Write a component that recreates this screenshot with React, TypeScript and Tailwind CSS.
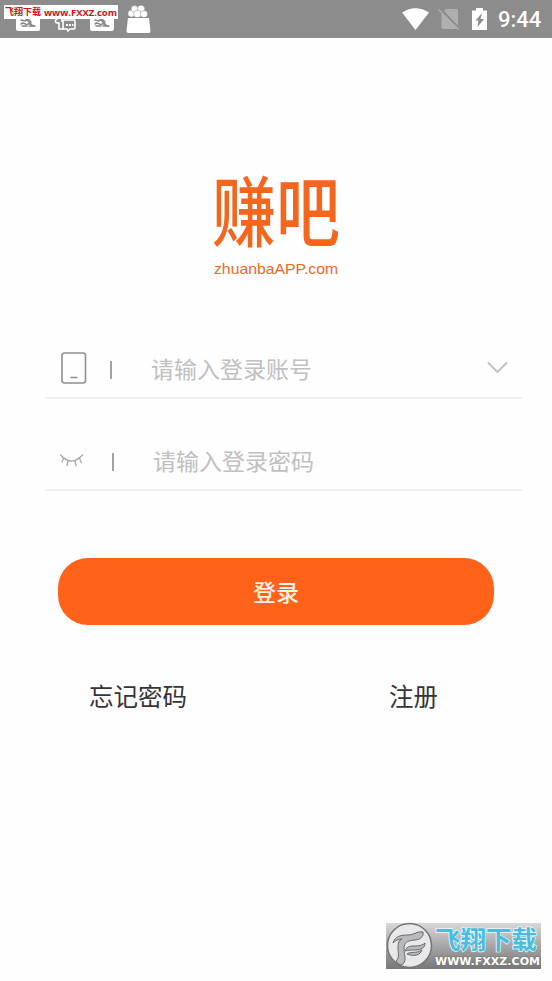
import React, { useState } from "react";

type IconProps = { className?: string };

const PictureIcon = ({ className }: IconProps) => (
  <svg className={className} width="24" height="22" viewBox="0 0 24 22">
    <rect width="24" height="22" rx="2" fill="#fff" />
    <g fill="none" stroke="#858585" strokeWidth="1.5" strokeLinecap="round">
      <path d="M5 11l4 1 3-2 3 3" />
      <path d="M5 15c3-3 4 2 7 0 2-1 4 2 6 2" />
      <path d="M6 17h5M10 10l5 5M13 17h6" />
    </g>
  </svg>
);

const ChatIcon = ({ className }: IconProps) => (
  <svg className={className} width="22" height="22" viewBox="0 0 22 22">
    <path
      d="M3 3v5c-2 0-2 4 0 4h2v6h5M8 8v3"
      fill="none"
      stroke="#fff"
      strokeWidth="1.6"
    />
    <path
      d="M10 9h10q1 0 1 1v7q0 1-1 1h-4l-2 2-1-2h-3q-1 0-1-1v-7q0-1 1-1z"
      fill="none"
      stroke="#fff"
      strokeWidth="1.6"
    />
    <path d="M12 13h2v2h-2zM15 13h2v2h-2zM18 13h1.5v2H18z" fill="#fff" />
  </svg>
);

const BagIcon = ({ className }: IconProps) => (
  <svg className={className} width="25" height="28" viewBox="0 0 25 28">
    <path d="M2 13h21l1.500 13q.2 2-2 2H2.500q-2 0-2-2z" fill="#fff" />
    <g fill="#fff" stroke="#8b8c8b" strokeWidth=".5">
      <circle cx="5.500" cy="8.500" r="3.600" />
      <circle cx="8.500" cy="4" r="3.400" />
      <circle cx="15" cy="4" r="3.800" />
      <circle cx="11.500" cy="9" r="3.800" />
      <circle cx="18" cy="9" r="3.600" />
    </g>
    <path d="M2 12.500h21" stroke="#8b8c8b" strokeWidth=".6" />
  </svg>
);

const StatusBar = () => (
  <div className="relative flex h-[38px] items-start bg-[#8b8c8b] font-[Roboto,sans-serif]">
    <PictureIcon className="mt-[9px] ml-4" />
    <ChatIcon className="mt-[11px] ml-[14px]" />
    <PictureIcon className="mt-[9px] ml-[14px]" />
    <BagIcon className="mt-[5px] ml-3" />
    {/* site badge */}
    <div className="absolute top-[5px] left-1 flex h-[14px] w-[114px] items-center bg-white pl-px font-bold text-[#d40d16]">
      <span className="w-[39px] font-['Noto_Sans_CJK_SC',sans-serif] text-[9px] leading-[14px] whitespace-nowrap">
        飞翔下载
      </span>
      <svg className="overflow-visible" width="73" height="14">
        <text
          x="0"
          y="11"
          textLength="73"
          lengthAdjust="spacingAndGlyphs"
          fill="currentColor"
          fontFamily="Open Sans, sans-serif"
          fontSize="9.500"
        >
          www.FXXZ.com
        </text>
      </svg>
    </div>
    <div className="ml-auto flex h-[38px] items-center pr-3">
      <svg width="27" height="22" viewBox="0 0 27 22">
        <path d="M0 4.500Q13.500-4 27 4.500L13.500 22z" fill="#fff" />
      </svg>
      <svg className="ml-[9px]" width="22" height="22" viewBox="0 0 22 22">
        <path d="M8 1h10.500q1.500 0 1.500 1.500v17q0 1.500-1.500 1.500H5q-1.500 0-1.500-1.500V6z" fill="#afafaf" />
        <path d="M2 .5l20 21" stroke="#8b8c8b" strokeWidth="2.500" />
        <path d="M.5 1.500l20 20" stroke="#afafaf" strokeWidth="1.500" />
      </svg>
      <svg className="ml-3" width="15" height="22" viewBox="0 0 15 22">
        <path d="M4 0h7v2.500h4V22H0V2.500h4z" fill="#fff" />
        <path d="M10 5L3.500 12.500h3l-1 6.500 6.500-8H8.500z" fill="#8b8c8b" />
      </svg>
      <span className="mt-0.5 ml-[11px] w-[42px] text-[22px] leading-none font-medium whitespace-nowrap text-white">
        9:44
      </span>
    </div>
  </div>
);

const Logo = () => (
  <div className="flex flex-col items-center text-[#f4661e]">
    <svg className="overflow-visible" width="132" height="92" viewBox="0 0 132 92">
      <text
        x="2"
        y="0"
        transform="translate(0 73.500) scale(1 1.200)"
        fill="currentColor"
        fontFamily="Noto Sans CJK SC, sans-serif"
        fontWeight="500"
        fontSize="64"
        textLength="128"
      >
        赚吧
      </text>
    </svg>
    <svg className="overflow-visible" width="124" height="20">
      <text
        x="0"
        y="15"
        textLength="124"
        lengthAdjust="spacingAndGlyphs"
        fill="currentColor"
        fontFamily="Liberation Sans, sans-serif"
        fontSize="15"
      >
        zhuanbaAPP.com
      </text>
    </svg>
  </div>
);

const PhoneIcon = () => (
  <svg width="26" height="32" viewBox="0 0 26 32" fill="none" stroke="#918d92">
    <rect x="1" y="1" width="23.500" height="30" rx="2.500" strokeWidth="1.600" />
    <path d="M9.500 25.500h7" strokeWidth="1.500" />
  </svg>
);

const ClosedEyeIcon = () => (
  <svg
    className="mt-[3px]"
    width="26"
    height="14"
    viewBox="0 0 26 14"
    fill="none"
    stroke="#aaa6aa"
    strokeWidth="1.300"
    strokeLinecap="round"
  >
    <path d="M1.500 1Q12.500 13 23.500 1M4.500 4.500L3 8M9 7l-1 4.500M16 7l1 4.500M20.500 4.500l2 4" />
  </svg>
);

const Watermark = () => (
  <div className="flex h-[46px] w-[155px] items-center bg-gradient-to-b from-[#d8d8d8] to-[#777]">
    <svg className="overflow-visible" width="155" height="46" viewBox="0 0 155 46">
      <circle cx="23.500" cy="22.500" r="22" fill="#e8e8ea" stroke="#737477" strokeWidth="1.500" />
      <g fill="#b8babd" stroke="#66686b" strokeWidth="1" strokeLinejoin="round">
        <path d="M7 20c2-7 8-8 15-8 6 0 9-4 15-3 1 4-2 8-9 8-7 1-10 2-10 9 0 7 3 10-1 15-2 2-5 0-7-3 4-4 2-8 2-13 0-5 1-8 4-9-4 0-7 2-9 4z" />
        <path d="M19 28c2-5 6-5 10-5 5 0 8-1 10-3 0 5-4 7-10 7-4 0-7 0-10 1z" />
        <path d="M21 31c4-3 9 0 15-4-2 5-7 7-15 4z" />
      </g>
      <text
        x="49"
        y="0"
        transform="translate(0 26) scale(1 .96)"
        fill="#49bce1"
        stroke="#e9f8fc"
        strokeWidth="1.500"
        paintOrder="stroke"
        fontFamily="Noto Sans CJK SC, sans-serif"
        fontWeight="700"
        fontSize="25.500"
        textLength="102"
      >
        飞翔下载
      </text>
      <text
        x="49"
        y="42"
        fill="#fff"
        stroke="#777"
        strokeWidth="1"
        paintOrder="stroke"
        fontFamily="DejaVu Sans, sans-serif"
        fontWeight="700"
        fontSize="10"
        textLength="105"
        lengthAdjust="spacingAndGlyphs"
      >
        WWW.FXXZ.COM
      </text>
    </svg>
  </div>
);

const App = () => {
  const [account, setAccount] = useState("");
  const [password, setPassword] = useState("");

  return (
    <div className="flex h-[981px] w-[552px] flex-col overflow-hidden bg-[#fefefe] font-['Noto_Sans_CJK_SC',sans-serif]">
      <StatusBar />

      <div className="mt-[129px] h-[112px]">
        <Logo />
      </div>

      {/* login form */}
      <form className="mt-[59px] flex flex-col" onSubmit={(e) => e.preventDefault()}>
        <div className="mr-[30px] ml-[45px] flex h-[61px] items-center border-b-2 border-[#f0f1f1] pl-4">
          <PhoneIcon />
          <span className="mt-1 ml-[23px] h-[18px] w-[2px] bg-[#a5a0a5]" />
          <input
            className="ml-[39px] h-9 w-[300px] text-[23px] text-gray-800 placeholder-[#c0c0c0] focus:outline-none"
            placeholder="请输入登录账号"
            value={account}
            onChange={(e) => setAccount(e.target.value)}
          />
          <svg className="ml-auto mr-[14px] shrink-0" width="21" height="13" fill="none" stroke="#c2c2c2" strokeWidth="2">
            <path d="M1.500 2l9 9 9-9" strokeLinecap="round" strokeLinejoin="round" />
          </svg>
        </div>
        <div className="mt-[31px] mr-[30px] ml-[45px] flex h-[61px] items-center border-b-2 border-[#f0f1f1] pl-[14px]">
          <ClosedEyeIcon />
          <span className="mt-1 ml-[27px] h-[18px] w-[2px] bg-[#a5a0a5]" />
          <input
            type="text"
            className="ml-[39px] h-9 w-[300px] text-[23px] text-gray-800 placeholder-[#c0c0c0] focus:outline-none"
            placeholder="请输入登录密码"
            value={password}
            onChange={(e) => setPassword(e.target.value)}
          />
        </div>
        <button
          type="submit"
          className="mt-[67px] ml-[58px] h-[67px] w-[436px] rounded-[30px] bg-[#ff6218] text-[23px] font-medium text-[#fff0e4]"
        >
          登录
        </button>
      </form>

      <div className="mt-[53px] flex justify-between pr-[114px] pl-[89px] text-[24.500px] leading-9 text-[#363438]">
        <button>忘记密码</button>
        <button>注册</button>
      </div>

      <div className="mt-auto mb-3 flex justify-end pr-[11px]">
        <Watermark />
      </div>
    </div>
  );
};

export default App;
